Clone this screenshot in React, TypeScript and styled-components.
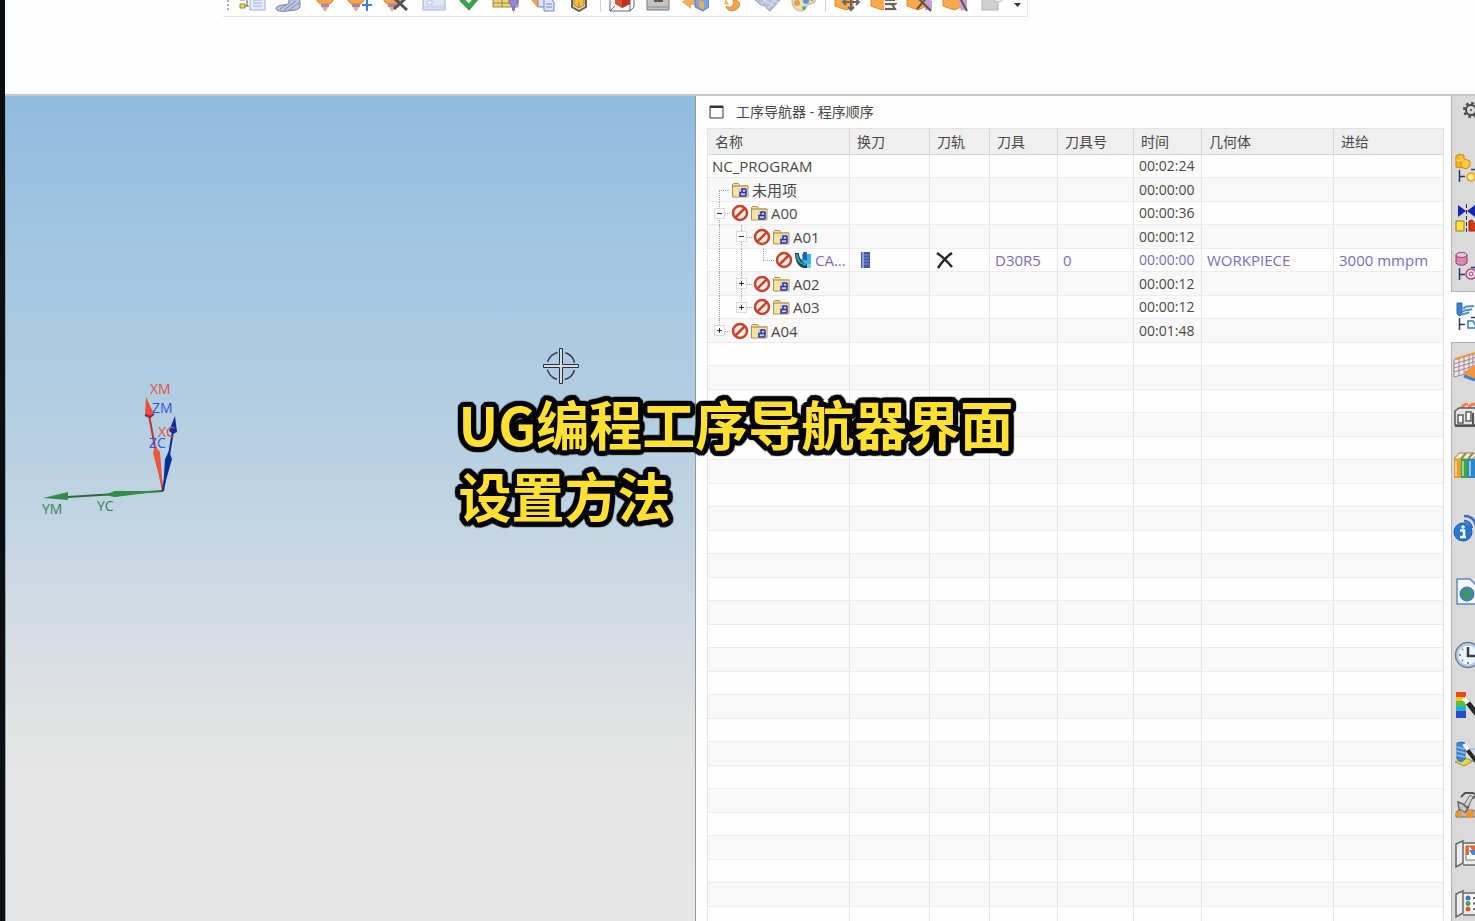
import React from "react";
import styled, { createGlobalStyle, css } from "styled-components";

const GlobalStyle = createGlobalStyle`
  * { box-sizing: border-box; }
  body {
    margin: 0;
    background: #fefefe;
    color: #484848;
    font: 14px/20px "Open Sans", "Noto Sans CJK SC", sans-serif;
    overflow: hidden;
  }
  button { border: 0; padding: 0; background: none; color: inherit; font: inherit; }
  svg { display: block; flex: none; }
`;

/* ---------- frame ---------- */

const Window = styled.div`
  position: relative;
  display: flex;
  flex-direction: column;
  height: 100vh;
  border-left: 5px solid #0c0f12;
  overflow: hidden;
`;

const Header = styled.header`
  flex: none;
  height: 96px;
  padding-left: 218px;
  border-bottom: 2px solid #c4c6c8;
`;

const Toolbar = styled.div`
  display: flex;
  align-items: flex-end;
  width: 805px;
  height: 17px;
  padding-bottom: 4px;
  border: solid #e6e6e6;
  border-width: 0 1px 1px 0;
  overflow: hidden;
`;

const Grip = styled.span`
  width: 2px;
  height: 16px;
  margin: 0 9px 0 4px;
  background: repeating-linear-gradient(#a9a9a9 0 2px, transparent 2px 4px);
`;

const ToolGroup = styled.div<{ $width: number }>`
  display: flex;
  justify-content: space-between;
  width: ${(p) => p.$width}px;
`;

const Separator = styled.span`
  width: 1px;
  height: 16px;
  margin: 0 7px;
  background: #d4d4d4;
`;

const ToolButton = styled.button`
  width: 28px;
  height: 24px;
`;

const MoreButton = styled.button`
  width: 12px;
  height: 14px;
  margin-left: 6px;
`;

const Workspace = styled.main`
  display: flex;
  flex: 1;
  min-height: 0;
`;

/* ---------- graphics view ---------- */

const Viewport = styled.section`
  position: relative;
  flex: 1;
  min-width: 0;
  border-left: 1px solid #8fa4b4;
  background: linear-gradient(
    #90bbe0 0%, #a2c5e1 18%, #b2cde2 37%, #c4d6e3 53%,
    #d5dce3 65%, #e0e2e3 75%, #e5e5e5 83%, #e6e6e6 100%
  );
`;

const Triad = styled.svg`
  position: absolute;
  left: 34px;
  top: 274px;
  font-size: 14px;
`;

const Cursor = styled.svg`
  position: absolute;
  left: 536px;
  top: 251px;
`;

/* ---------- navigator ---------- */

const Navigator = styled.section`
  display: flex;
  flex-direction: column;
  flex: none;
  width: 756px;
  padding: 0 7px 0 11px;
  border-left: 1px solid #8d99a3;
  overflow: hidden;
`;

const NavTitle = styled.h1`
  display: flex;
  flex: none;
  align-items: center;
  gap: 12px;
  height: 32px;
  margin: 0;
  padding: 0 0 0 2px;
  font-size: 14px;
  font-weight: 400;
`;

const Table = styled.table`
  table-layout: fixed;
  width: 100%;
  border: 1px solid #e2e2e2;
  border-spacing: 0;
`;

const HeadCell = styled.th`
  height: 26px;
  padding: 0 0 0 7px;
  border-bottom: 1px solid #d6d6d6;
  background: #efefef;
  font-weight: 400;
  text-align: left;
  & + & { border-left: 1px solid #d6d6d6; }
`;

const Row = styled.tr<{ $operation?: boolean }>`
  height: 23px;
  color: ${(p) => (p.$operation ? "#7b6cb8" : "inherit")};
  font-size: 15px;
  &:nth-child(even) { height: 24px; background: #f8f8f8; }
`;

const Cell = styled.td`
  padding: 0 0 0 5px;
  border-bottom: 1px solid #ececec;
  white-space: nowrap;
  & + & { border-left: 1px solid #e6e6e6; }
`;

const IconCell = styled(Cell)`
  padding-left: 6px;
`;

const NameCell = styled(Cell)`
  padding: 0;
`;

const TimeCell = styled(Cell)`
  font-size: 14px;
`;

const NameLine = styled.div<{ $root?: boolean }>`
  display: flex;
  align-items: center;
  gap: 1px;
  height: 22px;
  padding-left: ${(p) => (p.$root ? 4 : 0)}px;
`;

type GuideKind = "start" | "line" | "tee" | "end";

const Guide = styled.span<{ $kind: GuideKind }>`
  position: relative;
  display: flex;
  flex: none;
  align-items: center;
  justify-content: center;
  align-self: stretch;
  width: 22px;
  & + & { margin-left: -1px; }
  &::before {
    content: "";
    position: absolute;
    left: 11px;
    top: ${(p) => (p.$kind === "start" ? "11px" : "-1px")};
    bottom: ${(p) => (p.$kind === "end" ? "11px" : "-1px")};
    border-left: 1px dotted #a8a8a8;
  }
  ${(p) =>
    p.$kind !== "line" &&
    css`
      &::after {
        content: "";
        position: absolute;
        left: 11px;
        right: 0;
        top: 11px;
        border-top: 1px dotted #a8a8a8;
      }
    `}
`;

const Toggle = styled.button`
  position: relative;
  z-index: 1;
  width: 11px;
  height: 11px;
  margin-left: 1px;
  border: 1px solid #dcdcdc;
  background: #fcfcfc;
`;

const Label = styled.span`
  min-width: 0;
  margin-left: 2px;
  overflow: hidden;
`;

/* ---------- resource bar ---------- */

const ResourceBar = styled.nav`
  flex: none;
  width: 24px;
  overflow: hidden;
  background: #dadada;
`;

const TabGroup = styled.div<{ $gap?: number; $top?: number }>`
  display: flex;
  flex-direction: column;
  gap: ${(p) => p.$gap ?? 0}px;
  padding-top: ${(p) => p.$top ?? 0}px;
  border-left: 1px solid #b2b2b2;
`;

const Tab = styled.button<{ $active?: boolean }>`
  display: flex;
  align-items: center;
  flex: none;
  width: 40px;
  height: ${(p) => (p.$active ? 52 : 49)}px;
  padding-left: 1px;
  ${(p) =>
    p.$active &&
    css`
      margin-left: -1px;
      padding-left: 2px;
      border: solid #b2b2b2;
      border-width: 1px 0;
      background: #fefefe;
    `}
`;

const SettingsButton = styled(Tab)`
  height: 28px;
`;

/* ---------- caption ---------- */

const outline = [
  [5, 0], [5, 2], [4, 3], [3, 4], [2, 5],
  [0, 5], [-2, 5], [-3, 4], [-4, 3], [-5, 2],
  [-5, 0], [-5, -2], [-4, -3], [-3, -4], [-2, -5],
  [0, -5], [2, -5], [3, -4], [4, -3], [5, -2],
  [2, 0], [-2, 0], [0, 2], [0, -2],
]
  .map(([x, y]) => `${x}px ${y}px 1px #050505`)
  .join(", ");

const Caption = styled.p`
  position: absolute;
  top: 387px;
  left: 0;
  right: 3px;
  width: 560px;
  margin: 0 auto;
  color: #ffe033;
  font: 700 53px/72px "Noto Sans CJK SC", sans-serif;
  white-space: nowrap;
  text-shadow: ${outline};
  pointer-events: none;
`;

/* ---------- toolbar drawings ---------- */

const ToolHead = ({ x = 14 }: { x?: number }) => (
  <g transform={`translate(${x - 14} 0)`}>
    <path d="M6 8h16v5l-3 3H9l-3-3z" fill="#f2a54a" stroke="#dd8a34" />
    <path d="M10 16h8v3h-8z" fill="#a583c0" />
    <path d="M11 19h6l-2 4h-2z" fill="#e6b184" />
  </g>
);

const OrangeBlock = () => (
  <path d="M2 8l10-4 8 4v11l-7 3-11-4z" fill="#f7a94c" stroke="#e08b31" />
);

const toolDrawings: Record<string, React.ReactNode> = {
  "程序顺序视图": (
    <>
      <path d="M2 8h5v4H2zM2 16h5v4H2z" fill="#e9d66a" stroke="#8d8f45" />
      <path d="M7 10h4M7 18h4M9 8v10" stroke="#56684f" fill="none" />
      <path d="M12 5h15v17H12z" fill="#e3ebf8" stroke="#9eb0d2" />
      <path d="M15 12h9M15 15h9M15 18h9" stroke="#9fb0cf" />
    </>
  ),
  "机床视图": (
    <>
      <path d="M15 10c5 0 11-1 11 4v5c-2 4-8 3-13 4-6 1-11 0-11-3 2-4 10-2 13-5z" fill="#bfc5dc" stroke="#707a9f" />
      <path d="M6 21l6-4M10 22l12-9M15 22l10-7M19 12l4-2" stroke="#8089ad" />
    </>
  ),
  "几何视图": <ToolHead />,
  "创建刀具": (
    <>
      <ToolHead x={9} />
      <path d="M20 12v11M15 17h10" stroke="#3f7fdc" strokeWidth="2" />
    </>
  ),
  "删除刀具": (
    <>
      <ToolHead x={9} />
      <path d="M11 10l13 12M24 9L11 21" stroke="#55504f" strokeWidth="3" />
    </>
  ),
  "创建程序": (
    <>
      <path d="M3 4h22v18H3z" fill="#dfe5f5" stroke="#a0aed1" />
      <path d="M7 13h5v3H7z" fill="#fff" stroke="#b7c1de" />
      <path d="M4 19h20" stroke="#cfd7ee" strokeWidth="3" />
    </>
  ),
  "确认刀轨": <path d="M5 11l8 8L24 6" fill="none" stroke="#3f9f4f" strokeWidth="5" />,
  "生成刀轨": (
    <>
      <path d="M1 5h25v14H1z" fill="#f0d668" stroke="#8e8758" />
      <path d="M1 15h25M10 6v13" stroke="#8e8758" />
      <path d="M17 9h9v6l-3 3-1 5h-1l-1-5-3-3z" fill="#9488d0" stroke="#776bb9" />
    </>
  ),
  "复制工序": (
    <>
      <path d="M1 11l7-5 5 4v8l-5 1z" fill="#f3a14c" />
      <path d="M9 7h9v12H9z" fill="#d8e2f6" stroke="#7489b8" />
      <path d="M15 11h7l3 3v9H15z" fill="#dce6f8" stroke="#7489b8" />
      <path d="M17 16h6M17 19h6" stroke="#7489b8" />
    </>
  ),
  "工件": (
    <>
      <path d="M7 5v14l7 4 7-4V5" fill="#e7e2d1" stroke="#67604f" strokeWidth="2" />
      <path d="M14 9l5 3v5l-5 3-5-3v-5z" fill="#f4bf3c" stroke="#a77b24" />
      <path d="M14 14v6" stroke="#a77b24" />
    </>
  ),
  "实体显示": (
    <>
      <path d="M2 6h20v17H2zM22 23l4-4V4M2 23l5-5" fill="none" stroke="#6b6763" />
      <path d="M7 7l8-4 7 4v9l-8 4-7-4z" fill="#d94f35" />
      <path d="M14 10v10l8-4V7z" fill="#b83424" />
    </>
  ),
  "毛坯显示": (
    <>
      <path d="M3 5h22v17H3z" fill="#c3c4c1" stroke="#777" />
      <path d="M10 10h9v4h-9z" fill="#6c5341" />
      <path d="M4 19h20" stroke="#a6a8a4" strokeWidth="2" />
    </>
  ),
  "变换": (
    <>
      <path d="M1 14l9-7v4h5v6h-5v4z" fill="#f3ad61" />
      <path d="M14 8l7-3 7 3v11l-6 4-8-4z" fill="#7fa1e8" stroke="#5878c6" />
      <path d="M18 12l5 2v7l-5-2z" fill="#f2ab55" />
    </>
  ),
  "撤回": (
    <>
      <path d="M3 6c6 0 6 7 4 10l5 1-3-6" fill="#f2b36b" />
      <path d="M9 18c4 3 9 0 7-6 6 0 9 4 5 8-3 4-11 4-12-2z" fill="#f2a34b" stroke="#d88a38" />
      <path d="M3 10c7-4 16-4 21 1" fill="none" stroke="#f2a34b" strokeWidth="4" />
    </>
  ),
  "网格": (
    <>
      <path d="M1 12l12-7 14 6-11 12c-4-2-4-6-9-6z" fill="#b7c2da" stroke="#8f9dbe" />
      <path d="M6 10l14 8M10 7l14 8M7 16l12-9M14 20l9-12" stroke="#dde4f2" />
    </>
  ),
  "配色": (
    <>
      <path d="M2 13C3 4 25 2 26 11c0 5-6 4-8 6s-3 6-7 6c-5 0-9-4-9-10z" fill="#e8dcc0" stroke="#bca985" />
      <circle cx="7" cy="15" r="3" fill="#ed9a45" />
      <circle cx="14" cy="20" r="2" fill="#6bac5b" />
      <circle cx="16" cy="13" r="3" fill="#5b96d8" />
      <circle cx="22" cy="11" r="2" fill="#7eb45d" />
    </>
  ),
  "移动对象": (
    <>
      <OrangeBlock />
      <path d="M10 14h16M18 6v16M13 11l-3 3 3 3M23 11l3 3-3 3M15 19l3 3 3-3" fill="none" stroke="#6a6664" strokeWidth="2" />
    </>
  ),
  "对象列表": (
    <>
      <OrangeBlock />
      <path d="M15 9h12v14H15z" fill="#f0efee" />
      <path d="M16 12h10M16 16h10l-3 2M16 21h10l-2-3" fill="none" stroke="#66615f" strokeWidth="2" />
    </>
  ),
  "删除对象": (
    <>
      <OrangeBlock />
      <path d="M20 10l7 3v9h-7z" fill="#c6a0d2" />
      <path d="M12 21L23 8M13 10l13 13" stroke="#5d5654" strokeWidth="2" />
    </>
  ),
  "编辑对象": (
    <>
      <OrangeBlock />
      <path d="M17 9l9 3v9l-6 2z" fill="#c6a0d2" />
      <path d="M14 10h5l7 13" fill="none" stroke="#5d5654" strokeWidth="2" />
    </>
  ),
  "图层": (
    <>
      <path d="M5 7h16v15H5z" fill="#cfcfcf" stroke="#b2b2b2" />
      <circle cx="21" cy="8" r="6" fill="#f1f1f1" stroke="#b8b8b8" />
    </>
  ),
};

const toolNames = Object.keys(toolDrawings);
const toolGroups = [
  { width: 355, names: toolNames.slice(0, 10) },
  { width: 210, names: toolNames.slice(10, 16) },
  { width: 172, names: toolNames.slice(16) },
];

/* ---------- table drawings ---------- */

const Forbidden = () => (
  <svg width="18" height="18" viewBox="0 0 18 18">
    <circle cx="9" cy="9" r="7" fill="#fbeee9" stroke="#c8432b" strokeWidth="2.500" />
    <path d="M4.500 13.500l9-9" stroke="#c8432b" strokeWidth="2.500" />
  </svg>
);

const Folder = () => (
  <svg width="18" height="18" viewBox="0 0 18 18">
    <path d="M1.500 3.500l1-1h5l1.500 2h8v11.500h-15.500z" fill="#f6e3a0" stroke="#a8925c" />
    <path d="M2 5h15" stroke="#c9b070" strokeWidth="2" />
    <path d="M8 7h8.500v9H8z" fill="#c9cbe8" />
    <path d="M15 8h-4v3.500M15 8v7M15 11.500H9v3.500h6" fill="none" stroke="#35358f" strokeWidth="1.500" />
  </svg>
);

const CavityMill = () => (
  <svg width="18" height="18" viewBox="0 0 18 18">
    <path d="M1 2h4c0 6 3 9 12 9v6h-7C4 16 1 10 1 2z" fill="#1d3f4d" />
    <path d="M3 3c0 7 4 10 9 11" fill="none" stroke="#2fa5b5" strokeWidth="2" />
    <path d="M8 3h9v10h-5c-3-1-4-3-4-5z" fill="#39b6dc" />
    <path d="M9 1h4v8H9z" fill="#2d5cc0" />
    <path d="M13 13h4v4h-4z" fill="#67d0e2" />
  </svg>
);

const ToolChange = () => (
  <svg width="18" height="18" viewBox="0 0 18 18" role="img" aria-label="换刀">
    <path d="M5 1h9v16H5z" fill="#4156a5" />
    <path d="M6 1h2v16H6z" fill="#8fa2e0" />
    <path d="M8 4h5M8 7h5M8 10h5M8 13h5" stroke="#7d90d6" />
  </svg>
);

const MissingPath = () => (
  <svg width="18" height="18" viewBox="0 0 18 18" role="img" aria-label="无刀轨">
    <path d="M1 2c6 4 10 8 15 14M16 2C10 6 6 11 2 17" fill="none" stroke="#262626" strokeWidth="2.500" />
  </svg>
);

/* ---------- resource bar drawings ---------- */

const TreeLines = () => (
  <path d="M6.500 17v12M6 23.500h6M18 16.500h6" fill="none" stroke="#2b3576" strokeWidth="1.500" />
);

const Door = () => (
  <path d="M3 5l7-3v22l-7 4zM10 4h16v22H10" fill="#ececec" stroke="#686868" strokeWidth="1.500" />
);

const tabDrawings: Record<string, React.ReactNode> = {
  "设置": (
    <>
      <circle cx="18" cy="16" r="5" fill="none" stroke="#454545" strokeWidth="2" />
      <circle cx="18" cy="16" r="7" fill="none" stroke="#454545" strokeWidth="2" strokeDasharray="2.700 2.800" />
      <circle cx="18" cy="16" r="1" fill="#454545" />
    </>
  ),
  "装配导航器": (
    <>
      <TreeLines />
      <path d="M3 3l3-2 5 1v11l-3 2-5-1z" fill="#f4b41f" stroke="#c98a12" />
      <path d="M8 8l4-2 5 2v5l-4 3-5-2z" fill="#fbc93a" stroke="#c98a12" />
      <path d="M3 7l5 1 3-2M8 3v5" fill="none" stroke="#fbe07f" />
      <circle cx="18" cy="24" r="4" fill="#fff0a8" stroke="#eda81c" strokeWidth="2" />
    </>
  ),
  "约束导航器": (
    <>
      <path d="M5 3v12l8-6zM22 3v12l-8-6z" fill="#1625b4" />
      <path d="M13.500 2v28" stroke="#333" strokeDasharray="4 2" />
      <path d="M3 19h8v10H3z" fill="#fbe23c" stroke="#997b1f" />
      <path d="M16 29V19l3-1 8 11z" fill="#db3713" stroke="#8d2a14" />
    </>
  ),
  "部件导航器": (
    <>
      <TreeLines />
      <path d="M3 4v8c2 3 9 3 11 0V4z" fill="#d489b0" stroke="#8d3d69" />
      <ellipse cx="8.500" cy="4" rx="5.500" ry="2.500" fill="#f0c4da" stroke="#8d3d69" />
      <circle cx="18" cy="23" r="5" fill="#f3dce8" stroke="#a34a7d" strokeWidth="1.500" />
      <circle cx="18" cy="23" r="2" fill="none" stroke="#a34a7d" />
    </>
  ),
  "工序导航器": (
    <>
      <TreeLines />
      <path d="M4 2h5v11l-2 2-3-2z" fill="#3b82cb" stroke="#2c69b0" />
      <path d="M10 8c3-4 6-2 11-3M9 11c4-3 6-1 10-3M9 14c3-2 5-1 7-3" fill="none" stroke="#4d93d3" strokeWidth="2" />
      <path d="M15 20h5l4 7h-9z" fill="#eff8fb" stroke="#3a7ba9" strokeWidth="1.500" />
    </>
  ),
  "加工特征导航器": (
    <>
      <path d="M1 8L24 1v18L1 25z" fill="#f3e9d8" stroke="#8f83a4" />
      <path d="M1 12l23-7M1 16l23-7M1 20l23-7M6 7v16M11 5v17M16 4v16M20 2v16" stroke="#9184ac" fill="none" />
      <path d="M2 7l20-6" stroke="#ef9c35" strokeWidth="2" />
      <path d="M11 20l11-7v14l-11-4z" fill="#f0953c" />
      <path d="M11 24l11 4" stroke="#3f80d5" strokeWidth="3" />
    </>
  ),
  "机床导航器": (
    <>
      <path d="M9 8c0-4 3-5 6-5M16 8c0-4 3-5 6-5" fill="none" stroke="#ec8353" strokeWidth="3" />
      <path d="M2 10l4-3h18v17H2z" fill="#e3e3e1" stroke="#595959" strokeWidth="1.500" />
      <path d="M5 14h5v8H5zM13 11h5v9h-5z" fill="#fff" stroke="#5f5f5f" strokeWidth="1.500" />
      <path d="M2 25h22M20 12v12" stroke="#545454" strokeWidth="2" />
    </>
  ),
  "重用库": (
    <>
      <path d="M1 9l5-6h18l-4 6z" fill="#f8efcf" stroke="#93865c" />
      <path d="M8 9l5-6M15 9l5-6" stroke="#93865c" strokeWidth="2" />
      <path d="M1 9h7v19H1z" fill="#f39b25" />
      <path d="M8 9h7v19H8z" fill="#35a84b" />
      <path d="M15 9h9v19h-9z" fill="#2d87cf" />
      <path d="M3 11v15M10 11v15M17 11v15" stroke="#ffffff80" strokeWidth="2" />
    </>
  ),
  "信息": (
    <>
      <path d="M11 3c7 0 11 4 12 10M11 8c5 0 7 3 8 7" fill="none" stroke="#396fc1" strokeWidth="2.500" />
      <circle cx="10" cy="19" r="9" fill="#2577d3" stroke="#1c5bad" />
      <circle cx="10" cy="14" r="1.800" fill="#fff" />
      <path d="M7 17.500h4v6M7 24h6" fill="none" stroke="#fff" strokeWidth="2.500" />
    </>
  ),
  "浏览器": (
    <>
      <path d="M4 3h13l7 7v18H4z" fill="#f4f8fc" stroke="#5e8abf" strokeWidth="1.500" />
      <circle cx="14" cy="18" r="7" fill="#3f83c0" stroke="#35709f" />
      <path d="M14 12l4 5-2 6h-5l-2-5z" fill="#3c9b51" />
    </>
  ),
  "历史记录": (
    <>
      <circle cx="15" cy="16" r="12.500" fill="#b9cde2" stroke="#6d7f94" strokeWidth="1.500" />
      <circle cx="15" cy="16" r="9.500" fill="#eef5fb" />
      <path d="M15 8v9h7" fill="none" stroke="#30404f" strokeWidth="2.500" />
      <path d="M6 16h2M15 23v2M9 10l1 1M9 22l1-1" stroke="#5f7080" strokeWidth="1.500" />
    </>
  ),
  "系统材料": (
    <>
      <path d="M3 3h10v6H3z" fill="#e8471e" />
      <path d="M3 8h10v5H3z" fill="#f6c520" />
      <path d="M3 12h10v6H3z" fill="#54c23d" />
      <path d="M3 17h10v5H3z" fill="#20b4d3" />
      <path d="M3 22h10v7H3z" fill="#2a4bc4" />
      <path d="M12 10l14 18" stroke="#262626" strokeWidth="5" />
      <path d="M11 9l4 5" stroke="#fff" strokeWidth="5" />
    </>
  ),
  "加工向导": (
    <>
      <path d="M2 23l9 4 9-5-8-3z" fill="#e3d64c" stroke="#a09335" />
      <path d="M4 4l4-1 4 1v16l-4 3-4-3z" fill="#3e83d0" stroke="#2a67ae" />
      <path d="M4 8l8 2M4 12l8 2M4 16l8 2M14 10h8" stroke="#8abdf0" strokeWidth="1.500" />
      <path d="M13 9l13 17" stroke="#262626" strokeWidth="4" />
      <path d="M11 5l4 6" stroke="#f5f7fa" strokeWidth="4" />
    </>
  ),
  "机器人": (
    <>
      <path d="M8 8l4-4h8l4 3-7 3-2 9" fill="none" stroke="#555" strokeWidth="2" />
      <path d="M17 6l3 2-5 10-4-2z" fill="#d2d2d2" stroke="#6b6b6b" />
      <path d="M5 13l5 2 5 5-4 4-5-4z" fill="#c8c8c8" stroke="#666" strokeWidth="1.500" />
      <path d="M3 25c0-5 7-5 9-1 3-4 9-4 12 0v4H3z" fill="#b5b5b5" stroke="#666" />
      <circle cx="6" cy="25" r="3" fill="#f09628" />
      <circle cx="17" cy="25" r="4" fill="#f09628" />
    </>
  ),
  "角色图片": (
    <>
      <Door />
      <path d="M13 7h13v14H13z" fill="#fff" stroke="#8a6c52" />
      <path d="M13 7h3v9h-3zM16 7h9v4h-6z" fill="#e6662e" />
      <path d="M16 11h8v5h-5z" fill="#4d86cb" />
    </>
  ),
  "角色列表": (
    <>
      <Door />
      <path d="M12 6h14v17H12z" fill="#fff" />
      <circle cx="15" cy="9" r="2.500" fill="#3379c7" />
      <circle cx="15" cy="14.500" r="2.500" fill="#39a552" />
      <circle cx="15" cy="20" r="2.500" fill="#e1542c" />
      <path d="M20 9h4M20 14.500h4M20 20h4" stroke="#666" strokeWidth="2" />
    </>
  ),
};

const TabIcon = ({ name }: { name: string }) => (
  <svg width="32" height="32" viewBox="0 0 32 32" fill="none">
    {tabDrawings[name]}
  </svg>
);

const NavTab = ({ name, active }: { name: string; active?: boolean }) => (
  <Tab $active={active} aria-label={name} title={name}>
    <TabIcon name={name} />
  </Tab>
);

/* ---------- data ---------- */

const columns = [
  { title: "名称", width: 141 },
  { title: "换刀", width: 80 },
  { title: "刀轨", width: 60 },
  { title: "刀具", width: 68 },
  { title: "刀具号", width: 76 },
  { title: "时间", width: 68 },
  { title: "几何体", width: 132 },
  { title: "进给" },
];

interface Item {
  name: string;
  time: string;
  guides: GuideKind[];
  toggle?: "+" | "-";
  forbidden?: boolean;
  operation?: { tool: string; number: string; geometry: string; feed: string };
}

const items: Item[] = [
  { name: "NC_PROGRAM", time: "00:02:24", guides: [] },
  { name: "未用项", time: "00:00:00", guides: ["start"] },
  { name: "A00", time: "00:00:36", guides: ["tee"], toggle: "-", forbidden: true },
  { name: "A01", time: "00:00:12", guides: ["line", "tee"], toggle: "-", forbidden: true },
  {
    name: "CA...",
    time: "00:00:00",
    guides: ["line", "line", "end"],
    forbidden: true,
    operation: { tool: "D30R5", number: "0", geometry: "WORKPIECE", feed: "3000 mmpm" },
  },
  { name: "A02", time: "00:00:12", guides: ["line", "tee"], toggle: "+", forbidden: true },
  { name: "A03", time: "00:00:12", guides: ["line", "end"], toggle: "+", forbidden: true },
  { name: "A04", time: "00:01:48", guides: ["end"], toggle: "+", forbidden: true },
];

const blankRows = Array.from({ length: 26 }, (_, i) => i);

const ItemRow = ({ item }: { item: Item }) => {
  const op = item.operation;
  return (
    <Row $operation={Boolean(op)}>
      <NameCell>
        <NameLine $root={item.guides.length === 0}>
          {item.guides.map((kind, i) => (
            <Guide key={i} $kind={kind}>
              {item.toggle && i === item.guides.length - 1 && (
                <Toggle aria-label={item.toggle === "+" ? "展开" : "折叠"}>
                  <svg width="9" height="9" viewBox="0 0 9 9">
                    <path d={item.toggle === "+" ? "M2 4.500h5M4.500 2v5" : "M2 4.500h5"} stroke="#333" />
                  </svg>
                </Toggle>
              )}
            </Guide>
          ))}
          {item.forbidden && <Forbidden />}
          {item.guides.length > 0 && (op ? <CavityMill /> : <Folder />)}
          {item.guides.length > 0 ? <Label>{item.name}</Label> : item.name}
        </NameLine>
      </NameCell>
      <IconCell>{op && <ToolChange />}</IconCell>
      <IconCell>{op && <MissingPath />}</IconCell>
      <Cell>{op?.tool}</Cell>
      <Cell>{op?.number}</Cell>
      <TimeCell>{item.time}</TimeCell>
      <Cell>{op?.geometry}</Cell>
      <Cell>{op?.feed}</Cell>
    </Row>
  );
};

export default function App() {
  return (
    <>
      <GlobalStyle />
      <Window>
        <Header>
          <Toolbar role="toolbar">
            <Grip />
            {toolGroups.map((group, i) => (
              <React.Fragment key={group.width}>
                {i > 0 && <Separator />}
                <ToolGroup $width={group.width}>
                  {group.names.map((name) => (
                    <ToolButton key={name} aria-label={name} title={name}>
                      <svg width="28" height="24" viewBox="0 0 28 24" fill="none">
                        {toolDrawings[name]}
                      </svg>
                    </ToolButton>
                  ))}
                </ToolGroup>
              </React.Fragment>
            ))}
            <MoreButton aria-label="更多">
              <svg width="12" height="14" viewBox="0 0 12 14">
                <path d="M3 5h7l-3.500 4z" fill="#333" />
              </svg>
            </MoreButton>
          </Toolbar>
        </Header>

        <Workspace>
          <Viewport>
            <Triad width="150" height="150" viewBox="40 0 150 150">
              <path d="M163 121L68 127" stroke="#2b6a3c" strokeWidth="2" />
              <path d="M43 128l25-6v8z" fill="#348a47" />
              <path d="M163 121l-48 6-11-2 11-4z" fill="#348a47" />
              <path d="M163 121L149 45" stroke="#b5392d" strokeWidth="2" />
              <path d="M146 27l8 17-4 3-5-2z" fill="#e94f3a" />
              <path d="M145 45l5 2 4-3" stroke="#7c3040" strokeWidth="2" fill="none" />
              <path d="M163 121l-10-38 2-7 5 6z" fill="#f0543d" />
              <path d="M163 121l10-60" stroke="#123083" strokeWidth="2" />
              <path d="M175 46l2 16-4 2-4-3z" fill="#0c2f96" />
              <path d="M163 121l2-32 4-8 3 8z" fill="#0c2f96" />
              <text x="150" y="24" fill="#dc5546">XM</text>
              <text x="152" y="43" fill="#2f55d8">ZM</text>
              <text x="158" y="67" fill="#dc5546">XC</text>
              <text x="149" y="78" fill="#3c50d8">ZC</text>
              <text x="42" y="144" fill="#3a8154">YM</text>
              <text x="97" y="141" fill="#3a8154">YC</text>
            </Triad>
            <Cursor width="38" height="38" viewBox="0 0 38 38" fill="none">
              <circle cx="19" cy="19" r="14" stroke="#353c43" strokeWidth="1.500" strokeDasharray="14 8" strokeDashoffset="-4" />
              <path d="M17.500 1.500h3v16h16v3h-16v16h-3v-16h-16v-3h16z" fill="#d5dde3" stroke="#2c3034" />
            </Cursor>
          </Viewport>

          <Navigator>
            <NavTitle>
              <svg width="15" height="14" viewBox="0 0 15 14">
                <path d="M1 1h13v12H1z" fill="#fff" stroke="#333" />
                <path d="M1 2h13" stroke="#333" strokeWidth="2" />
              </svg>
              工序导航器 - 程序顺序
            </NavTitle>
            <Table>
              <colgroup>
                {columns.map((c) => (
                  <col key={c.title} width={c.width} />
                ))}
              </colgroup>
              <thead>
                <tr>
                  {columns.map((c) => (
                    <HeadCell key={c.title} scope="col">{c.title}</HeadCell>
                  ))}
                </tr>
              </thead>
              <tbody>
                {items.map((item) => (
                  <ItemRow key={item.name} item={item} />
                ))}
                {blankRows.map((n) => (
                  <Row key={n}>
                    {columns.map((c) => (
                      <Cell key={c.title} />
                    ))}
                  </Row>
                ))}
              </tbody>
            </Table>
          </Navigator>

          <ResourceBar>
            <TabGroup>
              <SettingsButton aria-label="设置" title="设置">
                <TabIcon name="设置" />
              </SettingsButton>
            </TabGroup>
            <TabGroup $top={20}>
              <NavTab name="装配导航器" />
              <NavTab name="约束导航器" />
              <NavTab name="部件导航器" />
              <NavTab name="工序导航器" active />
              <NavTab name="加工特征导航器" />
              <NavTab name="机床导航器" />
              <NavTab name="重用库" />
            </TabGroup>
            <TabGroup $top={14} $gap={14}>
              <NavTab name="信息" />
              <NavTab name="浏览器" />
              <NavTab name="历史记录" />
            </TabGroup>
            <TabGroup $top={1} $gap={1}>
              <NavTab name="系统材料" />
              <NavTab name="加工向导" />
              <NavTab name="机器人" />
              <NavTab name="角色图片" />
              <NavTab name="角色列表" />
            </TabGroup>
          </ResourceBar>
        </Workspace>

        <Caption>
          UG编程工序导航器界面
          <br />
          设置方法
        </Caption>
      </Window>
    </>
  );
}
